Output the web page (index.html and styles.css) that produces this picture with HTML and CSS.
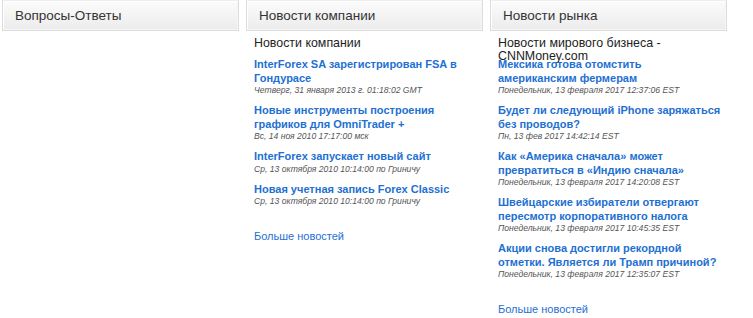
FILE: index.html
```html
<!DOCTYPE html>
<html>
<head>
  <meta charset="utf-8">
  <title>Новости</title>
  <link rel="stylesheet" href="styles.css">
</head>
<body>

<div class="columns">
  <div class="col">
    <div class="col-head">Вопросы-Ответы</div>
  </div>

  <div class="col">
    <div class="col-head">Новости компании</div>
    <div class="feed">
      <div class="feed-title">Новости компании</div>
      <div class="item">
        <a href="#">InterForex SA зарегистрирован FSA в Гондурасе</a>
        <div class="date">Четверг, 31 января 2013 г. 01:18:02 GMT</div>
      </div>
      <div class="item">
        <a href="#">Новые инструменты построения графиков для OmniTrader +</a>
        <div class="date">Вс, 14 ноя 2010 17:17:00 мск</div>
      </div>
      <div class="item">
        <a href="#">InterForex запускает новый сайт</a>
        <div class="date">Ср, 13 октября 2010 10:14:00 по Гриничу</div>
      </div>
      <div class="item">
        <a href="#">Новая учетная запись Forex Classic</a>
        <div class="date">Ср, 13 октября 2010 10:14:00 по Гриничу</div>
      </div>
      <a class="more" href="#">Больше новостей</a>
    </div>
  </div>

  <div class="col">
    <div class="col-head">Новости рынка</div>
    <div class="feed">
      <div class="feed-title">Новости мирового бизнеса - CNNMoney.com</div>
      <div class="item">
        <a href="#">Мексика готова отомстить американским фермерам</a>
        <div class="date">Понедельник, 13 февраля 2017 12:37:06 EST</div>
      </div>
      <div class="item">
        <a href="#">Будет ли следующий iPhone заряжаться без проводов?</a>
        <div class="date">Пн, 13 фев 2017 14:42:14 EST</div>
      </div>
      <div class="item">
        <a href="#">Как «Америка сначала» может превратиться в «Индию сначала»</a>
        <div class="date">Понедельник, 13 февраля 2017 14:20:08 EST</div>
      </div>
      <div class="item">
        <a href="#">Швейцарские избиратели отвергают пересмотр корпоративного налога</a>
        <div class="date">Понедельник, 13 февраля 2017 10:45:35 EST</div>
      </div>
      <div class="item">
        <a href="#">Акции снова достигли рекордной отметки. Является ли Трамп причиной?</a>
        <div class="date">Понедельник, 13 февраля 2017 12:35:07 EST</div>
      </div>
      <a class="more" href="#">Больше новостей</a>
    </div>
  </div>
</div>

</body>
</html>
```

FILE: styles.css
```css
body {
  margin: 0;
  background: #fff;
  font-family: "Liberation Sans", Arial, sans-serif;
  color: #222;
}

.columns {
  display: flex;
  gap: 7px;
  padding-left: 2px;
}

.col {
  width: 237px;
}

.col-head {
  height: 31px;
  line-height: 29px;
  padding-left: 12px;
  font-size: 13.5px;
  color: #333;
  background: linear-gradient(#fbfbfb, #ececec);
  border: 1px solid #dcdcdc;
  border-top-color: #eee;
  box-shadow: inset 1px 1px 0 #fff, inset -1px -1px 0 #f6f6f6;
  box-sizing: border-box;
}

/* title has a fixed height, long titles spill onto the first item */
.feed {
  padding: 6px 5px 0 8px;
}

.feed-title {
  height: 21px;
  font-size: 12.4px;
  line-height: 13px;
  color: #222;
}

.item {
  margin-bottom: 8px;
}

.item a {
  display: block;
  font-size: 11px;
  line-height: 13.5px;
  font-weight: bold;
  color: #1e70d2;
  text-decoration: none;
}

.date {
  font-size: 8.6px;
  line-height: 11px;
  font-style: italic;
  color: #555;
}

.more {
  display: inline-block;
  margin-top: 15px;
  font-size: 11px;
  color: #1e70d2;
  text-decoration: none;
}
```
